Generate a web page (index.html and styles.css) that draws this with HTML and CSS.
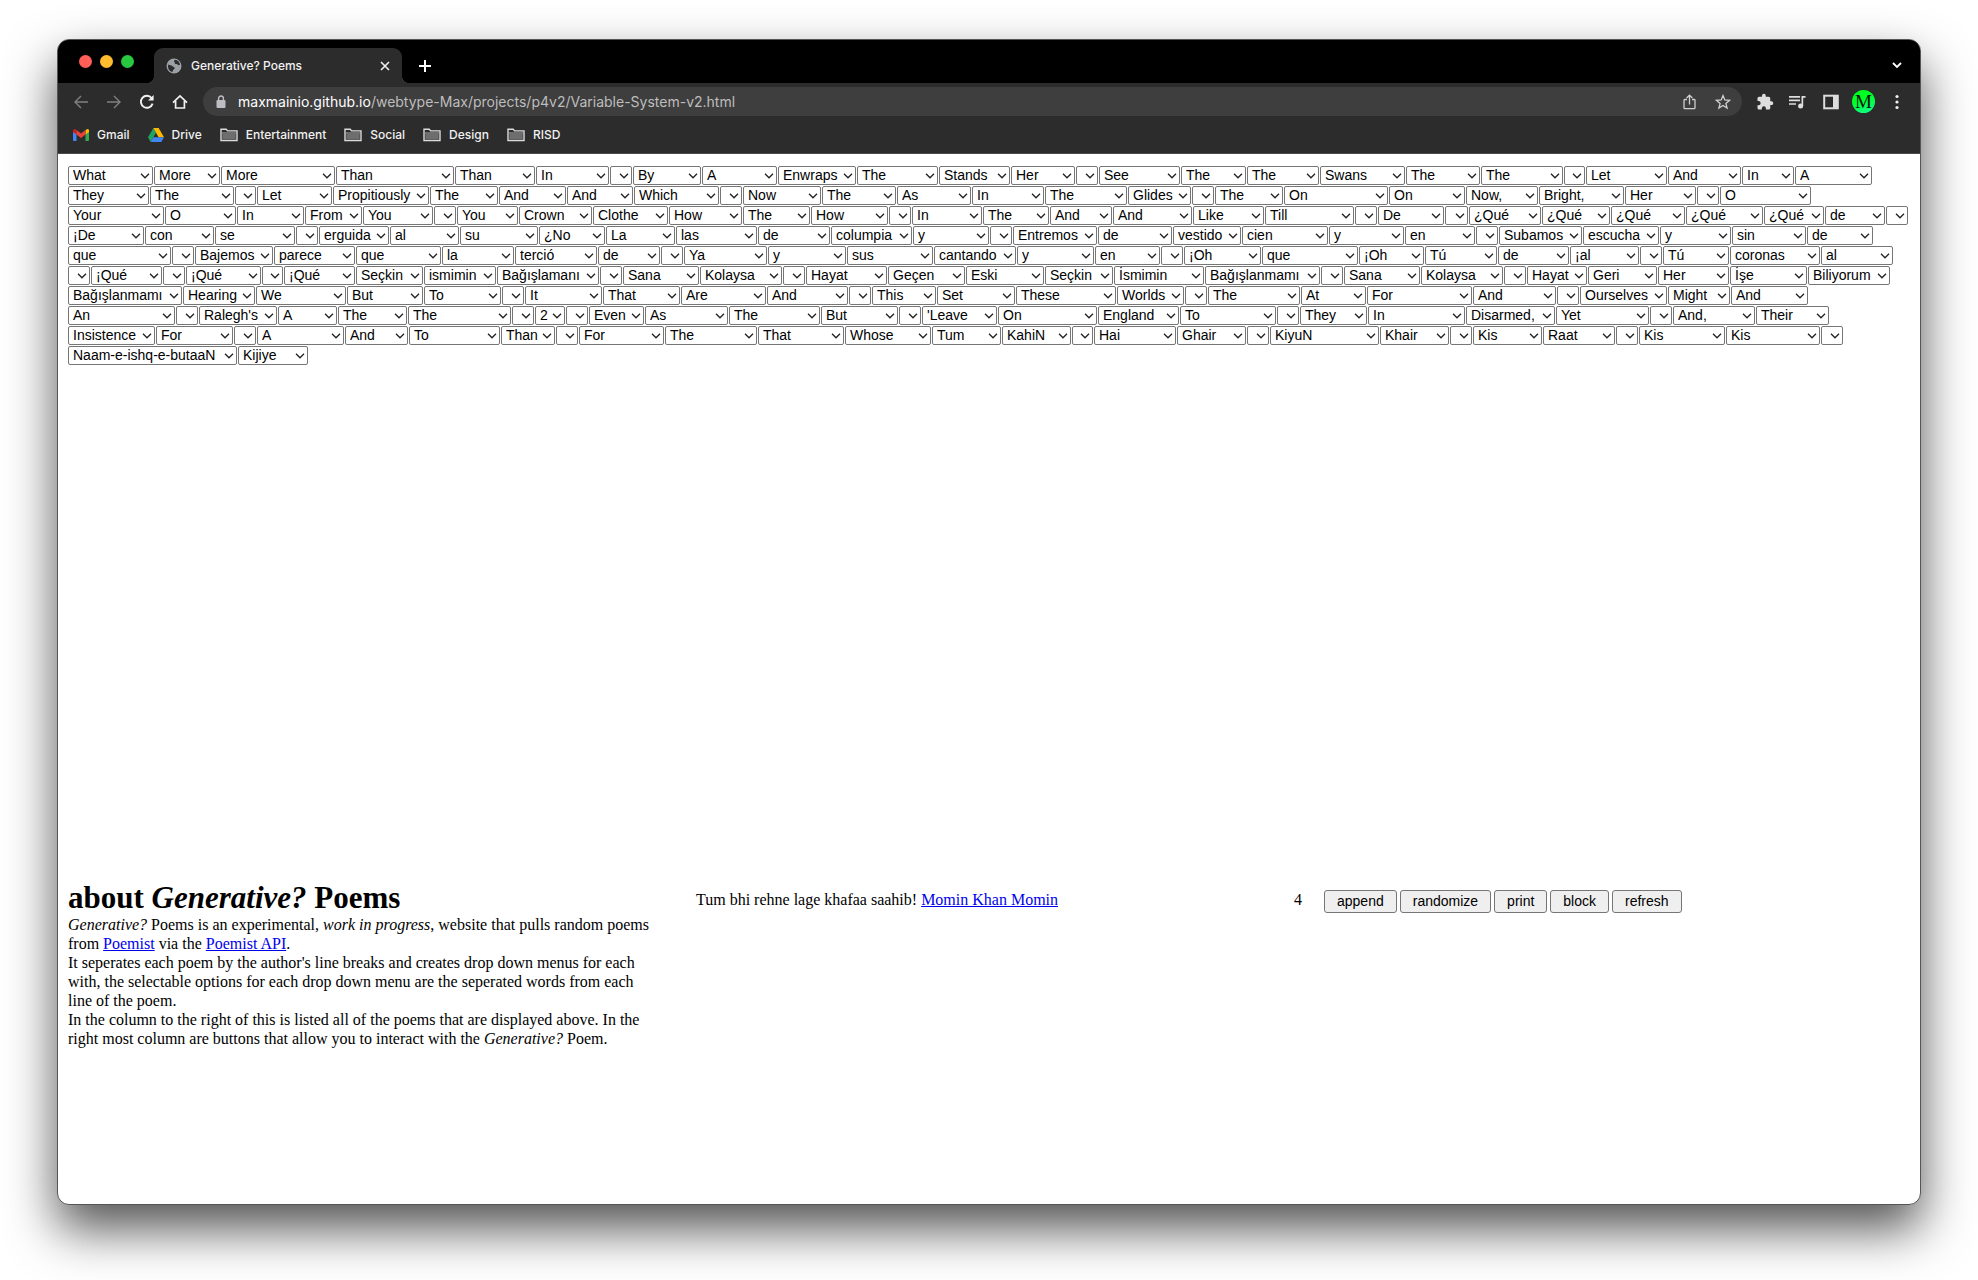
FILE: index.html
```html
<!DOCTYPE html>
<html lang="en">
<head>
<meta charset="utf-8">
<title>Generative? Poems</title>
<link rel="stylesheet" href="styles.css">
</head>
<body>
<div class="window">
  <header class="chrome">
    <div class="tabstrip">
      <div class="lights">
        <span class="light light-red"></span><span class="light light-yellow"></span><span class="light light-green"></span>
      </div>
      <div class="tab">
        <svg class="tab-icon" width="16" height="16" viewBox="0 0 16 16" aria-hidden="true"><circle cx="8" cy="8" r="7.5" fill="#9aa0a6"/><path d="M2.2 6.4 C4 7.6 5.2 6.8 6.2 8 C7 9.2 8.8 8.6 8.6 10.2 C8.4 11.6 6.6 11.4 6.6 14 C3.6 13.6 1.4 10.4 2.2 6.4 Z M9 1.8 C7.6 2.6 7.8 3.6 8.8 4.2 C8.2 5.6 9.8 6.4 11 6 C11.8 7.4 13 7.2 14 7 C13.8 4.4 12 2.2 9 1.8 Z" fill="#2c2c2c"/></svg>
        <span class="tab-title">Generative? Poems</span>
        <button class="tab-close" aria-label="Close tab"><svg width="10" height="10" viewBox="0 0 10 10"><path d="M1 1 9 9M9 1 1 9" stroke="#f1f1f1" stroke-width="1.6"/></svg></button>
      </div>
      <button class="tool" aria-label="New tab"><svg width="14" height="14" viewBox="0 0 14 14"><path d="M7 1V13M1 7H13" stroke="#fff" stroke-width="2"/></svg></button>
      <button class="tool tool-end" aria-label="Search tabs"><svg width="10" height="7" viewBox="0 0 10 7"><path d="M1 1 5 5 9 1" fill="none" stroke="#fff" stroke-width="1.8"/></svg></button>
    </div>

    <div class="toolbar">
      <button class="tool" aria-label="Back"><svg width="16" height="16" viewBox="0 0 16 16" fill="none" stroke="#808080" stroke-width="1.4"><path d="M15 8H2M8 2 2 8 8 14"/></svg></button>
      <button class="tool" aria-label="Forward"><svg width="16" height="16" viewBox="0 0 16 16" fill="none" stroke="#808080" stroke-width="1.4"><path d="M1 8H14M8 2 14 8 8 14"/></svg></button>
      <button class="tool" aria-label="Reload"><svg width="16" height="16" viewBox="0 0 16 16" fill="none" stroke="#f1f1f1" stroke-width="1.9"><path d="M13.6 9.6A6 6 0 1 1 12.6 4"/><path d="M14.6 1V6.6H9Z" fill="#f1f1f1" stroke="none"/></svg></button>
      <button class="tool" aria-label="Home"><svg width="16" height="16" viewBox="0 0 16 16" fill="none" stroke="#f1f1f1" stroke-width="1.7"><path d="M1 8.6 8 2 15 8.6M3.6 7V14H12.4V7"/></svg></button>
      <div class="address">
        <svg width="10" height="14" viewBox="0 0 10 14" aria-hidden="true"><rect x="0.5" y="5" width="9" height="8" rx="1" fill="#bdbdc2"/><path d="M2.6 5.5V3.4a2.4 2.4 0 0 1 4.8 0V5.5" fill="none" stroke="#bdbdc2" stroke-width="1.4"/></svg>
        <span class="url"><span class="host">maxmainio.github.io</span>/webtype-Max/projects/p4v2/Variable-System-v2.html</span>
        <button class="tool" aria-label="Share"><svg width="13" height="16" viewBox="0 0 13 16" fill="none" stroke="#cfcfcf" stroke-width="1.3"><path d="M4 5.5H1.8Q1 5.5 1 6.3V13.7Q1 14.6 1.8 14.6H11.2Q12 14.6 12 13.7V6.3Q12 5.5 11.2 5.5H9M6.5 10.5V1.4M3.6 4 6.5 1.2 9.4 4"/></svg></button>
        <button class="tool" aria-label="Bookmark this page"><svg width="16" height="16" viewBox="0 0 16 16" fill="none" stroke="#cfcfcf" stroke-width="1.3"><path d="M8 1.6 9.8 6 14.6 6.3 10.9 9.4 12.1 14.1 8 11.5 3.9 14.1 5.1 9.4 1.4 6.3 6.2 6Z"/></svg></button>
      </div>
      <button class="tool" aria-label="Extensions"><svg width="18" height="18" viewBox="0 0 24 24"><path fill="#dedede" d="M20.5 11H19V7a2 2 0 0 0-2-2h-4V3.500a2.500 2.500 0 0 0-5 0V5H4a2 2 0 0 0-2 2v3.800h1.500a2.700 2.700 0 0 1 0 5.400H2V20a2 2 0 0 0 2 2h3.800v-1.500a2.700 2.700 0 0 1 5.400 0V22H17a2 2 0 0 0 2-2v-4h1.500a2.500 2.500 0 0 0 0-5Z"/></svg></button>
      <button class="tool" aria-label="Media controls"><svg width="17" height="14" viewBox="0 0 17 14"><path d="M0 1.800H11M0 5.400H11M0 9H7" stroke="#dedede" stroke-width="1.700"/><path d="M12.500 1H16.500V2.800H14.200V11H12.500Z" fill="#dedede"/><circle cx="11.600" cy="11" r="2.500" fill="#dedede"/></svg></button>
      <button class="tool" aria-label="Side panel"><svg width="16" height="16" viewBox="0 0 16 16"><rect x="1.200" y="1.700" width="13.600" height="12.600" fill="none" stroke="#dedede" stroke-width="2"/><rect x="10" y="2" width="5" height="12" fill="#dedede"/></svg></button>
      <button class="tool" aria-label="Profile"><span class="avatar">M</span></button>
      <button class="tool" aria-label="Menu"><svg width="4" height="16" viewBox="0 0 4 16" fill="#f1f1f1"><circle cx="2" cy="2.500" r="1.600"/><circle cx="2" cy="8" r="1.600"/><circle cx="2" cy="13.500" r="1.600"/></svg></button>
    </div>

    <nav class="bookmarks">
      <a class="bookmark" href="#gmail"><svg width="16" height="12" viewBox="0 0 16 12" aria-hidden="true"><path d="M0 1.500V11q0 1 1 1H3.500V4Z" fill="#4285f4"/><path d="M16 1.500V11q0 1-1 1H12.500V4Z" fill="#34a853"/><path d="M12.500 1V5.500L16 3V1.500Q15.500-.6 13.500.4Z" fill="#fbbc04"/><path d="M0 3 3.500 5.500V1L2.500.4Q.5-.6 0 1.500Z" fill="#c5221f"/><path d="M3.500 1 8 4.500 12.500 1V5.500L8 9 3.500 5.500Z" fill="#ea4335"/></svg>Gmail</a>
      <a class="bookmark" href="#drive"><svg width="16" height="14" viewBox="0 0 16 14" aria-hidden="true"><path d="M5.400 0 0 9.300 2.700 14 8 4.600Z" fill="#1fa463"/><path d="M5.400 0H10.600L16 9.300H10.600Z" fill="#ffba00"/><path d="M5.400 9.300H16L13.300 14H2.700Z" fill="#4285f4"/></svg>Drive</a>
      <button class="bookmark"><svg class="folder" width="18" height="14" viewBox="0 0 18 14" aria-hidden="true"><path d="M1 12.500V1.300H6.200L7.600 2.900H17V12.500Z" fill="#2c2c2c" stroke="#dcdcdc" stroke-width="1.400"/><path d="M2.300 6H15.700V11.300H2.300Z" fill="#6e6e6e"/><path d="M1.700 5H16.300" stroke="#b0b0b0"/></svg>Entertainment</button>
      <button class="bookmark"><svg class="folder" width="18" height="14" viewBox="0 0 18 14" aria-hidden="true"><path d="M1 12.500V1.300H6.200L7.600 2.900H17V12.500Z" fill="#2c2c2c" stroke="#dcdcdc" stroke-width="1.400"/><path d="M2.300 6H15.700V11.300H2.300Z" fill="#6e6e6e"/><path d="M1.700 5H16.300" stroke="#b0b0b0"/></svg>Social</button>
      <button class="bookmark"><svg class="folder" width="18" height="14" viewBox="0 0 18 14" aria-hidden="true"><path d="M1 12.500V1.300H6.200L7.600 2.900H17V12.500Z" fill="#2c2c2c" stroke="#dcdcdc" stroke-width="1.400"/><path d="M2.300 6H15.700V11.300H2.300Z" fill="#6e6e6e"/><path d="M1.700 5H16.300" stroke="#b0b0b0"/></svg>Design</button>
      <button class="bookmark"><svg class="folder" width="18" height="14" viewBox="0 0 18 14" aria-hidden="true"><path d="M1 12.500V1.300H6.200L7.600 2.900H17V12.500Z" fill="#2c2c2c" stroke="#dcdcdc" stroke-width="1.400"/><path d="M2.300 6H15.700V11.300H2.300Z" fill="#6e6e6e"/><path d="M1.700 5H16.300" stroke="#b0b0b0"/></svg>RISD</button>
    </nav>
  </header>

  <main class="page">
    <section class="poem" id="poem" aria-label="Poem"></section>
    <section class="info">
      <div class="about">
        <h1>about <i>Generative?</i> Poems</h1>
        <p><i>Generative?</i> Poems is an experimental, <i>work in progress</i>, website that pulls random poems from <a href="#poemist">Poemist</a> via the <a href="#api">Poemist API</a>.</p>
        <p>It seperates each poem by the author's line breaks and creates drop down menus for each with, the selectable options for each drop down menu are the seperated words from each line of the poem.</p>
        <p>In the column to the right of this is listed all of the poems that are displayed above. In the right most column are buttons that allow you to interact with the <i>Generative?</i> Poem.</p>
      </div>
      <p class="sources">Tum bhi rehne lage khafaa saahib! <a href="#momin">Momin Khan Momin</a></p>
      <div class="controls">
        <span class="count">4</span>
        <button class="action">append</button>
        <button class="action">randomize</button>
        <button class="action">print</button>
        <button class="action">block</button>
        <button class="action">refresh</button>
      </div>
    </section>
  </main>
</div>
<script src="poem.js"></script>
</body>
</html>
```
FILE: poem.js
```js
// A missing word is a line break in the poem.
const ROWS = [
  "What:86 More:67 More:115 Than:119 Than:81 In:74 :23 By:69 A:76 Enwraps:79 The:82 Stands:72 Her:65 :23 See:82 The:66 The:73 Swans:86 The:75 The:83 :22 Let:82 And:74 In:53 A:78",
  "They:82 The:85 :22 Let:76 Propitiously:97 The:69 And:68 And:67 Which:86 :23 Now:79 The:75 As:75 In:73 The:83 Glides:64 :23 The:69 On:105 On:77 Now,:73 Bright,:86 Her:72 :23 O:92",
  "Your:97 O:72 In:68 From:58 You:71 :23 You:62 Crown:74 Clothe:76 How:74 The:68 How:78 :23 In:71 The:67 And:63 And:80 Like:72 Till:90 :23 De:67 :24 ¿Qué:73 ¿Qué:69 ¿Qué:75 ¿Qué:78 ¿Qué:61 de:61 :23",
  "¡De:77 con:70 se:81 :23 erguida:71 al:70 su:79 ¿No:67 La:70 las:82 de:73 columpia:82 y:77 :23 Entremos:85 de:75 vestido:69 cien:87 y:76 en:71 :23 Subamos:84 escucha:77 y:72 sin:75 de:67",
  "que:104 :23 Bajemos:79 parece:82 que:86 la:73 terció:83 de:63 :23 Ya:84 y:79 sus:87 cantando:83 y:78 en:66 :23 ¡Oh:78 que:97 ¡Oh:66 Tú:73 de:72 ¡al:70 :23 Tú:67 coronas:91 al:73",
  ":23 ¡Qué:72 :23 ¡Qué:76 :22 ¡Qué:72 Seçkin:68 ismimin:73 Bağışlamanı:103 :23 Sana:77 Kolaysa:83 :23 Hayat:82 Geçen:78 Eski:79 Seçkin:69 İsmimin:91 Bağışlanmamı:116 :23 Sana:77 Kolaysa:83 :23 Hayat:61 Geri:70 Her:72 İşe:78 Biliyorum:83",
  "Bağışlanmamı:115 Hearing:73 We:91 But:77 To:78 :23 It:78 That:78 Are:86 And:82 :23 This:65 Set:79 These:101 Worlds:68 :23 The:93 At:66 For:106 And:84 :23 Ourselves:88 Might:63 And:78",
  "An:108 :23 Ralegh's:79 A:60 The:70 The:104 :23 2:31 :23 Even:56 As:84 The:92 But:78 :23 'Leave:76 On:100 England:82 To:97 :23 They:68 In:98 Disarmed,:90 Yet:94 :23 And,:83 Their:74",
  "Insistence:88 For:78 :23 A:88 And:64 To:92 Than:55 :23 For:86 The:93 That:87 Whose:87 Tum:70 KahiN:70 :22 Hai:83 Ghair:70 :23 KiyuN:110 Khair:70 :23 Kis:70 Raat:73 :23 Kis:87 Kis:95 :23",
  "Naam-e-ishq-e-butaaN:170 Kijiye:71"
];
const GAP = 1;

const poem = document.getElementById("poem");
for (const line of ROWS) {
  const row = document.createElement("div");
  row.className = "row";
  for (const entry of line.split(" ")) {
    const [word, slot] = entry.split(":");
    const select = document.createElement("select");
    select.className = "word";
    select.setAttribute("aria-label", word || "Line break");
    select.style.width = (slot - GAP) + "px";
    select.add(new Option(word));
    row.append(select);
  }
  poem.append(row);
}
```
FILE: styles.css
```css
* {
  box-sizing: border-box;
}

body {
  margin: 0;
  min-height: 100vh;
  padding: 39px 57px 75px;
  display: flex;
  background: #fff;
  color: #000;
  font: 16px/19px "Liberation Serif", "Times New Roman", serif;
}

button {
  font: inherit;
  color: inherit;
}

.window {
  flex: 1;
  min-width: 0;
  display: flex;
  flex-direction: column;
  border: 1px solid #555;
  border-radius: 12px;
  background: #fff;
  overflow: hidden;
  box-shadow: 0 24px 50px rgba(0, 0, 0, 0.68);
}

/* Browser chrome */
.chrome {
  background: #2c2c2c;
  border-bottom: 1px solid #4a4a4a;
  color: #f1f1f1;
  font: 500 13px/16px Inter, "Liberation Sans", sans-serif;
}

.tabstrip {
  display: flex;
  align-items: flex-end;
  height: 43px;
  padding: 0 7px 0 21px;
  background: #000;
}

.lights {
  display: flex;
  gap: 8px;
  width: 75px;
  padding-bottom: 15px;
}

.light {
  width: 13px;
  height: 13px;
  border-radius: 50%;
}

.light-red { background: #ff5f57; }
.light-yellow { background: #febc2e; }
.light-green { background: #28c840; }

.tab {
  position: relative;
  display: flex;
  align-items: center;
  gap: 9px;
  width: 248px;
  height: 35px;
  padding: 0 12px;
  border-radius: 9px 9px 0 0;
  background: #2c2c2c;
}

/* curved feet of the active tab */
.tab::before,
.tab::after {
  content: "";
  position: absolute;
  bottom: 0;
  width: 8px;
  height: 8px;
}

.tab::before {
  left: -8px;
  background: radial-gradient(circle at 0 0, transparent 8px, #2c2c2c 8px);
}

.tab::after {
  right: -8px;
  background: radial-gradient(circle at 100% 0, transparent 8px, #2c2c2c 8px);
}

.tab-title {
  flex: 1;
  font-size: 12px;
}

.tab-close,
.tool {
  display: flex;
  align-items: center;
  justify-content: center;
  flex: none;
  height: 35px;
  padding: 0;
  border: 0;
  background: none;
}

.tool {
  width: 33px;
}

.tabstrip > .tool {
  margin-left: 6px;
}

.tabstrip > .tool-end {
  margin-left: auto;
}

.toolbar {
  display: flex;
  align-items: center;
  height: 37px;
  padding: 0 7px 0 6px;
}

.address {
  flex: 1;
  min-width: 0;
  display: flex;
  align-items: center;
  height: 29px;
  margin: 0 6px 0 7px;
  padding: 0 3px 0 13px;
  border-radius: 15px;
  background: #3e3e3e;
}

.url {
  flex: 1;
  min-width: 0;
  padding-left: 12px;
  overflow: hidden;
  white-space: nowrap;
  color: #bdbdbd;
  font-size: 14px;
  font-weight: 400;
}

.host {
  color: #fff;
}

.avatar {
  width: 23px;
  height: 23px;
  border-radius: 50%;
  background: linear-gradient(160deg, #0f2 40%, #1f9);
  color: #111;
  font: 19px/23px "Liberation Serif", serif;
  text-align: center;
}

.bookmarks {
  display: flex;
  align-items: center;
  gap: 18px;
  height: 33px;
  padding: 0 15px 4px;
}

.bookmark {
  display: flex;
  align-items: center;
  gap: 8px;
  padding: 0;
  border: 0;
  background: none;
  color: inherit;
  font-size: 12px;
  text-decoration: none;
}

/* Page */
.page {
  padding: 12px 10px 0;
}

.poem {
  min-height: 715px;
}

.row {
  display: flex;
  flex-wrap: wrap;
  column-gap: 1px;
}

.word {
  appearance: none;
  height: 19px;
  margin: 0 0 1px;
  padding: 0 0 0 4px;
  border: 1px solid #767676;
  border-radius: 2px;
  background: #fff url("data:image/svg+xml,%3Csvg xmlns='http://www.w3.org/2000/svg' width='10' height='6'%3E%3Cpath d='M1 .8 5 4.800 9 .8' fill='none' stroke='%23222' stroke-width='1.300'/%3E%3C/svg%3E") no-repeat right 2px center;
  color: #000;
  font: 14px/17px "Liberation Sans", Arial, sans-serif;
}

.info {
  display: grid;
  grid-template-columns: 628fr 598fr 616fr;
  align-items: start;
}

.about {
  padding-right: 40px;
}

h1 {
  margin: 0 0 1px;
  font-size: 31px;
  line-height: 33px;
}

p {
  margin: 0;
}

a {
  color: #00e;
}

.sources {
  padding-top: 9px;
}

.controls {
  display: flex;
  flex-wrap: wrap;
  gap: 3px;
  padding-top: 9px;
}

.count {
  width: 27px;
}

.action {
  height: 23px;
  padding: 0 12px;
  border: 1px solid #767676;
  border-radius: 3px;
  background: #efefef;
  font: 14px/17px "Liberation Sans", Arial, sans-serif;
}
```
